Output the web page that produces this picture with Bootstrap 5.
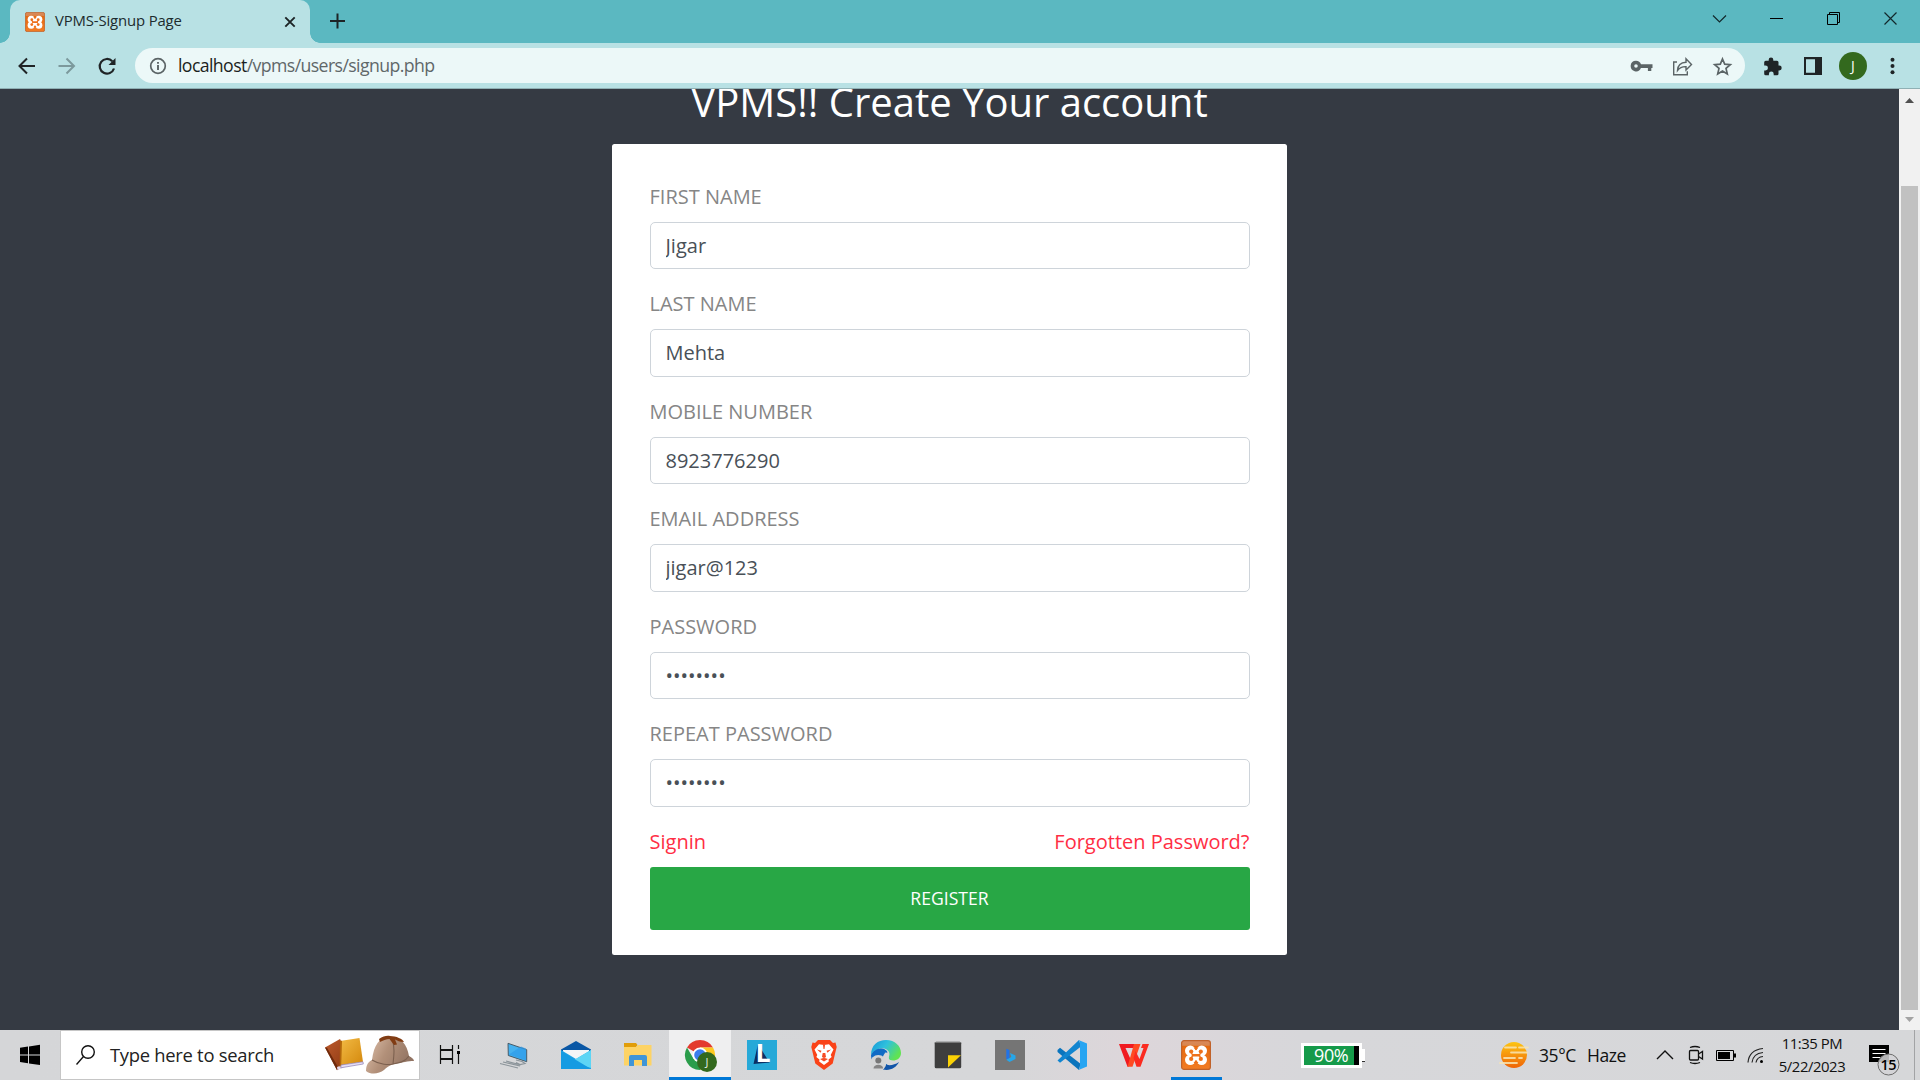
<!DOCTYPE html>
<html lang="en">
<head>
<meta charset="utf-8">
<title>VPMS-Signup Page</title>
<link href="https://cdn.jsdelivr.net/npm/bootstrap@5.3.0/dist/css/bootstrap.min.css" rel="stylesheet">
<style>
body{width:1920px;height:1080px;overflow:hidden;font-family:"Open Sans","Noto Sans",sans-serif;background:#343a40}
svg{display:block;flex:none}
.ui{font-family:"Open Sans","Noto Sans",sans-serif;white-space:nowrap}
.tabstrip{height:43px;background:#5bb8c1;padding-left:10px}
.browser-tab{position:relative;width:300px;height:43px;background:#b8e1e4;border-radius:10px 10px 0 0;padding-left:15px;padding-right:13px;color:#1c2b2d}
.browser-tab::before,.browser-tab::after{content:"";position:absolute;bottom:0;width:10px;height:10px}
.browser-tab::before{left:-10px;background:radial-gradient(circle at 0 0,transparent 9.5px,#b8e1e4 10px)}
.browser-tab::after{right:-10px;background:radial-gradient(circle at 100% 0,transparent 9.5px,#b8e1e4 10px)}
.tab-label{font-size:14.9px;letter-spacing:-.15px;line-height:20px;margin-left:10px;padding-bottom:3px}
.win-slot{width:57px;height:37px}
.toolbar{height:46px;background:#b8e1e4;border-bottom:1px solid #8fb0b4}
.tool-slot{width:40px;height:40px}
.omnibox{width:1610px;height:35px;border-radius:18px;background:#ecf8f8;padding-left:14px;padding-right:3px;margin-right:7px}
.address{font-size:17.7px;letter-spacing:-.6px;line-height:24px;margin-left:11px;padding-bottom:2px;color:#5f6769}
.address b{font-weight:400;color:#1b1f20}
.toolbar-end{width:8px}
.avatar{width:28px;height:28px;background:#33691e;color:#fff;font-size:14px}
.viewport{height:941px;background:#353a43}
.signup-col{width:675px}
.page-title{font-size:40px;line-height:48px;color:#fff;font-weight:400;margin:-11.5px 0 18.5px;white-space:nowrap}
.signup-form{background:#fff;border-radius:2.5px;padding:37.5px 37.5px 25px}
.field{margin-bottom:20px}
.field label{display:block;font-size:20px;line-height:30px;margin-bottom:10px;color:#868686;text-transform:uppercase}
.field .form-control{height:47.5px;font-size:20px;line-height:30px;padding:7.5px 15px;color:#495057;border:1px solid #ced4da;border-radius:5px}
.form-links{height:40px;font-size:20px;line-height:30px}
.form-links a{color:#ff2e44;text-decoration:none}
.btn-register{height:63.5px;background:#28a745;color:#fff;border-radius:3px;font-size:17.6px}
.scroll-track{width:21px;background:#f1f1f1;padding:9px 0 8px}
.scroll-thumb{width:17px;height:824px;background:#c1c1c1;margin-top:83px}
.taskbar{height:50px;background:linear-gradient(90deg,#d5d6d8 0,#d6d7d9 52%,#ddd6da 59%,#d7d7da 68%,#d6d7d9 100%);color:#111}
.start-slot{width:60px;height:50px}
.searchbox{width:360px;height:50px;background:#fff;border:1px solid #c6c6c6;padding-left:15px}
.search-label{font-size:18.4px;letter-spacing:-.28px;line-height:26px;margin-left:14px;width:213px;color:#222}
.view-slot{width:63px;height:50px}
.app-slot{width:62px;height:50px}
.app-open{background:#efeff0;border-bottom:3px solid #0078d7}
.app-open svg{margin-bottom:-3px}
.app-running{background:linear-gradient(#0078d7,#0078d7) center bottom/51px 3px no-repeat}
.battery{width:61px;height:25px;border:3px solid #fff;background:linear-gradient(90deg,#159a4a 50px,#000 50px);color:#fff;font-size:18px;letter-spacing:-.4px;line-height:18px;margin-left:74px;padding-left:10px}
.battery-tip{width:3px;height:13px;background:#fff;border-bottom:1px solid #333}
.weather{margin-left:133px;font-size:17.5px;letter-spacing:-.4px}
.clock{width:84px;margin-right:13px;font-size:14.9px;letter-spacing:-.45px;line-height:23px}
.show-desktop{width:6px;height:50px;border-left:1px solid #a2a3a5}
</style>
<script src="https://cdn.jsdelivr.net/npm/bootstrap@5.3.0/dist/js/bootstrap.bundle.min.js"></script>
</head>
<body class="d-flex flex-column m-0">
<svg width="0" height="0" class="position-absolute" aria-hidden="true">
  <defs>
    <linearGradient id="gx" x1="0" y1="0" x2="0" y2="1"><stop offset="0" stop-color="#d9895a"/><stop offset=".16" stop-color="#d9864f"/><stop offset=".2" stop-color="#e5690f"/><stop offset="1" stop-color="#f27c24"/></linearGradient>
    <symbol id="xampp" viewBox="0 0 30 30">
      <rect x=".6" y=".6" width="28.8" height="28.8" rx="2.5" fill="url(#gx)" stroke="#c0622a" stroke-width="1.2"/>
      <g fill="#fff"><circle cx="9.300" cy="10.800" r="5.300"/><circle cx="20.700" cy="10.800" r="5.300"/><circle cx="9.300" cy="19.700" r="5.300"/><circle cx="20.700" cy="19.700" r="5.300"/><path d="M7 10h16v10.500H7z"/></g>
      <g fill="#ee701a"><circle cx="10.200" cy="11.600" r="2.100"/><circle cx="19.800" cy="11.600" r="2.100"/><circle cx="10.200" cy="18.900" r="2.100"/><circle cx="19.800" cy="18.900" r="2.100"/><path d="M9.800 12.500l2.500 1.400h5.400l2.500-1.400-1 2.750 1 2.750-2.500-1.400h-5.400L9.800 18l1-2.750z"/><path d="M12.500 7.500h5L15 10.500zM12.500 22.900h5L15 20z"/></g>
    </symbol>
  </defs>
</svg>

<header class="ui">
  <div class="tabstrip d-flex align-items-start">
    <div class="browser-tab d-flex align-items-center">
      <svg width="20" height="20"><use href="#xampp"/></svg>
      <span class="tab-label me-auto">VPMS-Signup Page</span>
      <svg width="14" height="14" viewBox="0 0 14 14" stroke="#1d2426" stroke-width="1.900"><path d="M2.300 2.300l9.400 9.400M11.700 2.300l-9.400 9.400"/></svg>
    </div>
    <svg class="ms-3" width="24" height="43" viewBox="0 0 24 43" stroke="#1d2426" stroke-width="2"><path d="M4 21h15M11.500 13.500v15"/></svg>
    <div class="d-flex ms-auto pe-1">
      <div class="win-slot"><svg width="57" height="37" viewBox="-3 0 57 37" fill="none" stroke="#12282b" stroke-width="1.200"><path d="M22 15.500l6.500 6.500 6.500-6.500"/></svg></div>
      <div class="win-slot"><svg width="57" height="37" viewBox="-3 0 57 37" fill="none" stroke="#000"><path d="M22 18.500h13"/></svg></div>
      <div class="win-slot"><svg width="57" height="37" viewBox="-3 0 57 37" fill="none" stroke="#000"><path d="M22.500 14.500h10v10h-10zM24.500 14v-1.500h10v10H33"/></svg></div>
      <div class="win-slot"><svg width="57" height="37" viewBox="-3 0 57 37" fill="none" stroke="#12282b" stroke-width="1.200"><path d="M22.500 12.500l12 12M34.500 12.500l-12 12"/></svg></div>
    </div>
  </div>
  <div class="toolbar d-flex align-items-center">
    <div class="d-flex" style="padding-left:7px">
      <div class="tool-slot"><svg width="40" height="40" viewBox="0 0 40 40" fill="none" stroke="#1f2426" stroke-width="2"><path d="M28 20H13M20 12.500L12.500 20l7.500 7.500"/></svg></div>
      <div class="tool-slot"><svg width="40" height="40" viewBox="0 0 40 40" fill="none" stroke="#7c999c" stroke-width="2"><path d="M11.500 20h15M19.500 12.500L27 20l-7.500 7.500"/></svg></div>
      <div class="tool-slot"><svg width="40" height="40" viewBox="0 0 40 40" fill="none" stroke="#1f2426" stroke-width="2.200"><path d="M27 22.500a7.300 7.300 0 1 1-1.700-7.300"/><path d="M28.500 12v7h-7z" fill="#1f2426" stroke="none"/></svg></div>
    </div>
    <div class="omnibox d-flex align-items-center ms-auto">
      <svg width="18" height="18" viewBox="0 0 18 18" fill="none" stroke="#5b6466" stroke-width="1.700"><circle cx="9" cy="9" r="7.300"/><path d="M9 8v5M9 5v1.800" stroke-width="1.900"/></svg>
      <span class="address me-auto"><b>localhost</b>/vpms/users/signup.php</span>
      <div class="tool-slot"><svg width="40" height="40" viewBox="-1.500 0 40 40"><path fill="#5b6466" fill-rule="evenodd" d="M12.500 14.700a5.300 5.300 0 0 1 5 3.600H29v3.600h-1.200v3h-3.400v-3h-7a5.300 5.300 0 1 1-4.900-7.200zm0 3.500a1.800 1.800 0 1 0 0 3.600 1.800 1.800 0 0 0 0-3.600z"/></svg></div>
      <div class="tool-slot"><svg width="40" height="40" viewBox="-1 0 40 40" fill="none" stroke="#5b6466" stroke-width="1.400"><path d="M14 16h-3.300v12.800h13.600v-3.500"/><path d="M14.500 24.500c.3-5 3.500-8 8.500-8.200v-3.500l5.500 5.700-5.500 5.500v-3.400c-3.500-.2-6.300 1-8.500 3.900z"/></svg></div>
      <div class="tool-slot"><svg width="40" height="40" viewBox="-1 0 40 40" fill="none" stroke="#5b6466" stroke-width="1.700"><path d="M19.500 13l2.200 5.200 5.600.5-4.300 3.700 1.300 5.500-4.800-2.900-4.800 2.900 1.300-5.500-4.300-3.700 5.600-.5z"/></svg></div>
    </div>
    <div class="d-flex align-items-center">
      <div class="tool-slot"><svg width="40" height="40" viewBox="-.500 0 40 40"><path fill="#1f2426" d="M18.500 11.500a2.300 2.300 0 0 1 2.300 2.300v.9h3.700q1.500 0 1.500 1.500v3.400h.8a2.400 2.400 0 0 1 0 4.800H26v3.300q0 1.500-1.500 1.500h-3.300v-1.300a2.400 2.400 0 0 0-4.800 0v1.300h-3.200q-1.500 0-1.500-1.500v-3.200H13a2.400 2.400 0 0 0 0-4.900h-1.300v-3.400q0-1.500 1.500-1.500h3v-.9a2.300 2.300 0 0 1 2.300-2.300z"/></svg></div>
      <div class="tool-slot"><svg width="40" height="40" viewBox="0 0 40 40"><path fill="#1f2426" fill-rule="evenodd" d="M12 11h18v18H12zM14 13.300v13.400h9V13.300z"/></svg></div>
      <div class="tool-slot d-flex align-items-center justify-content-end pe-1"><div class="avatar rounded-circle d-flex align-items-center justify-content-center" style="margin-right:1px">J</div></div>
      <div class="tool-slot"><svg width="40" height="40" viewBox="0 0 40 40" fill="#1f2426"><circle cx="20.500" cy="13.800" r="2"/><circle cx="20.500" cy="20" r="2"/><circle cx="20.500" cy="26.200" r="2"/></svg></div>
    </div>
    <div class="toolbar-end"></div>
  </div>
</header>

<div class="viewport d-flex overflow-hidden">
  <main class="flex-grow-1 d-flex justify-content-center">
    <div class="signup-col">
      <h2 class="page-title text-center">VPMS!! Create Your account</h2>
      <form class="signup-form">
        <div class="field"><label for="f1">First Name</label><input id="f1" class="form-control" type="text" value="Jigar"></div>
        <div class="field"><label for="f2">Last Name</label><input id="f2" class="form-control" type="text" value="Mehta"></div>
        <div class="field"><label for="f3">Mobile Number</label><input id="f3" class="form-control" type="text" value="8923776290"></div>
        <div class="field"><label for="f4">Email address</label><input id="f4" class="form-control" type="text" value="jigar@123"></div>
        <div class="field"><label for="f5">Password</label><input id="f5" class="form-control" type="password" value="jigar123"></div>
        <div class="field"><label for="f6">Repeat Password</label><input id="f6" class="form-control" type="password" value="jigar123"></div>
        <div class="form-links d-flex justify-content-between"><a href="#">Signin</a><a href="#">Forgotten Password?</a></div>
        <button type="button" class="btn btn-register w-100 border-0">REGISTER</button>
      </form>
    </div>
  </main>
  <div class="scroll-track d-flex flex-column align-items-center">
    <svg width="9" height="5" viewBox="0 0 9 5"><path d="M0 5L4.500 0 9 5z" fill="#505050"/></svg>
    <div class="scroll-thumb"></div>
    <svg class="mt-auto" width="9" height="5" viewBox="0 0 9 5"><path d="M0 0l4.500 5L9 0z" fill="#a3a3a3"/></svg>
  </div>
</div>

<footer class="taskbar ui d-flex align-items-center">
  <div class="start-slot"><svg width="60" height="50" viewBox="0 0 60 50"><path d="M20 17.800l8-1.200v7.800h-8zM29 16.400l11-1.600v9.600H29zM20 25.400h8v7.900l-8-1.200zM29 25.400h11V35l-11-1.600z"/></svg></div>
  <div class="searchbox d-flex align-items-center">
    <svg width="20" height="22" viewBox="1 0 20 22" fill="none" stroke="#111" stroke-width="1.400"><circle cx="13" cy="8" r="6.300"/><path d="M8.500 12.500L1.500 20.500"/></svg>
    <span class="search-label">Type here to search</span>
    <svg width="92" height="48" viewBox="324 1031 92 48">
      <defs>
        <linearGradient id="bk1" x1="0" y1="0" x2="1" y2="1"><stop offset="0" stop-color="#bd5a2c"/><stop offset="1" stop-color="#87350f"/></linearGradient>
        <linearGradient id="bk2" x1="0" y1="0" x2="1" y2="1"><stop offset="0" stop-color="#f2bb45"/><stop offset="1" stop-color="#d4880c"/></linearGradient>
        <linearGradient id="hat" x1="0" y1="0" x2="1" y2=".4"><stop offset="0" stop-color="#e0c3ae"/><stop offset=".5" stop-color="#b29079"/><stop offset="1" stop-color="#927463"/></linearGradient>
      </defs>
      <path d="M326 1047.500l15-8.500 12 23-15 8z" fill="url(#bk1)"/><path d="M326 1047.500l2 .3 12 21-2 1.500z" fill="#6f2a0c"/><path d="M338 1067l16-6v3l-15.500 6z" fill="#e6dcf2"/>
      <path d="M341 1041l19.500-3 3.500 24-22.500 3z" fill="url(#bk2)"/><path d="M341 1041l2-.3-.8 25-1.500 1.500z" fill="#b3660b"/><path d="M342 1065l22-3.200.3 2.200-22.500 3.800z" fill="#e4ddf6" stroke="#8f81b2" stroke-width=".7"/>
      <path d="M373 1060c2-15 7-23 18-23 11 0 17 7 19 19 3 2 5 3 5 5-3 0-6 0-9 1-10 1-16 3-21 8-5 4-13 5-18 1 0-6 2-9 6-11z" fill="url(#hat)"/>
      <path d="M373 1060c8 5 17 5 21 4 6-1 12-2 16-8M393 1038c3 9 2 17 1 26" fill="none" stroke="#7c604f" stroke-width="1.100"/>
      <path d="M380 1039c4-3 8-3.500 11-3 6 0 13 3 14 6-4 0-7-1.500-9-2.500l2 5-3 .5-4.500-6c-3 0-7 1.500-9.500 3z" fill="#813c13"/>
    </svg>
  </div>
  <div class="view-slot"><svg width="62" height="50" viewBox="0 0 62 50" fill="none" stroke="#111" stroke-width="1.200"><path d="M20.500 15v4.500h12V15M20.500 34v-4.500h12V34M20.500 20.500h12v8h-12zM38.500 15v4M38.500 24v10"/><path d="M37 21h3v3h-3z" fill="#000" stroke="none"/></svg></div>

  <div class="app-slot d-flex justify-content-center"><svg width="50" height="50" viewBox="0 0 50 50"><path d="M19 13.300l18.700 6.400v12L19.300 25.500z" fill="#46b1ef" stroke="#41505b" stroke-width=".9"/><path d="M20 24.500l12-8 5 2v12z" fill="#2e9be9" opacity=".7"/><path d="M27 30l6 1.500 3 2-5 1-4-2M11 33.500l18 4.500M14 32l17 4M17 31l15 4" fill="none" stroke="#8b949a" stroke-width="1.200"/></svg></div>
  <div class="app-slot d-flex justify-content-center"><svg width="50" height="50" viewBox="0 0 50 50"><path d="M10 19.500L25 11l15 8.500V25H10z" fill="#0a57a5"/><path d="M12 20h26v12H12z" fill="#f3f5f7"/><path d="M10 20l15 9 15-9v19H10z" fill="#1fa5e5"/><path d="M40 20L19.500 32 40 38z" fill="#5dd5f5"/><path d="M10 21l30 18H10z" fill="#159be2"/></svg></div>
  <div class="app-slot d-flex justify-content-center"><svg width="50" height="50" viewBox="0 0 50 50"><path d="M11 13h12l1.500 2-2 3H11z" fill="#e19d09"/><path d="M11 17h12l2-2h13.500v20.500H11z" fill="#fdd365"/><path d="M16 36V27q0-2 2-2h14q2 0 2 2v9h-5v-6h-8v6z" fill="#3f95d8"/></svg></div>
  <div class="app-slot app-open d-flex justify-content-center"><svg width="50" height="50" viewBox="0 0 50 50"><path d="M25 25L12 17.500A15 15 0 0 1 38 17.500H25z" fill="#e33b2e"/><path d="M25 17.500H38A15 15 0 0 1 25 40l6.500-11.300z" fill="#fdc921"/><path d="M12 17.500A15 15 0 0 0 25 40l6.500-11.300h-13z" fill="#2a9d4b"/><circle cx="25" cy="25" r="7.500" fill="#fff"/><circle cx="25" cy="25" r="5.800" fill="#3b7ded"/><circle cx="32" cy="32" r="10" fill="#33691e"/><text x="32" y="36" font-size="11" text-anchor="middle" fill="#e8eee4">J</text></svg></div>
  <div class="app-slot d-flex justify-content-center"><svg width="50" height="50" viewBox="0 0 50 50"><path d="M10 10h30v30H10z" fill="#26a9d8"/><path d="M21 14l-4.500 20 16-1.500z" fill="#0c2f63"/><text x="18.600" y="32" font-family="Open Sans" font-weight="700" font-size="25" fill="#fff" textLength="15" lengthAdjust="spacingAndGlyphs">L</text></svg></div>
  <div class="app-slot d-flex justify-content-center"><svg width="50" height="50" viewBox="0 0 50 50"><path d="M19 10h12l3 3 2.500-.5 1.200 4.500-1 4-3 12.500L25 40l-8.700-6.500-3-12.500-1-4 1.200-4.500L16 13z" fill="#fa4318"/><path d="M25 15l5-.8 4.500 5.300-2.800 5.500 1 2-3.200 2.500.3 2L25 35l-4.800-3.500.3-2-3.200-2.500 1-2-2.800-5.500L20 14.200z" fill="#fff"/><path d="M18 19.500l4.500 1.200-1 2zM32 19.500l-4.500 1.200 1 2zM23 27l2 1.200 2-1.200-.7-4h-2.600zM21 29l4-1.200 4 1.200-4 2.500zM24 15h2l-.5 4h-1z" fill="#f64b25"/></svg></div>
  <div class="app-slot d-flex justify-content-center"><svg width="50" height="50" viewBox="0 0 50 50"><defs><linearGradient id="ed" x1="0" y1="0" x2="1" y2=".5"><stop offset="0" stop-color="#1595d8"/><stop offset=".5" stop-color="#2fc1dd"/><stop offset="1" stop-color="#60e352"/></linearGradient></defs><path d="M10 25c0-10 7-15 15-15 9 0 15 6 15 13 0 5-4 7.500-8 7.500-3.500 0-5.500-1.500-4-4 2-5-3-9-8-8-5 .5-8 3.500-10 6.500z" fill="url(#ed)"/><path d="M10 25c2-4 6-7 11-6.500 3 .4 5 2 5.500 4-4 1-5 4-4.500 7 1 3 3 5 6 6l-6 3c-7-1-12-6-12-13.500z" fill="#116bc5"/><path d="M22 33c4 3 10 3 16-1-3 6-9 9-16 7.500z" fill="#1054a8"/><path d="M24 22.500q3.500 0 4 3-1 3 1 4.500 4 2 9 0-5 5-11 4.500-4-1.500-4.500-6z" fill="#d6d7d9"/><circle cx="17.300" cy="33" r="8" fill="#d4d5d6"/><circle cx="17.300" cy="30.500" r="3" fill="#777"/><path d="M12.500 38.500c0-5 9.600-5 9.600 0z" fill="#858585"/></svg></div>
  <div class="app-slot d-flex justify-content-center"><svg width="50" height="50" viewBox="0 0 50 50"><rect x="11.700" y="11.700" width="26.500" height="26.500" rx="1.500" fill="#3e3e3e"/><path d="M11.700 12.500h26.500" stroke="#777"/><path d="M25 25.200h13L25 37.500z" fill="#fbd205"/></svg></div>
  <div class="app-slot d-flex justify-content-center"><svg width="50" height="50" viewBox="0 0 50 50"><path d="M10 10h30v30H10z" fill="#757575"/><path d="M21.300 18.700l3.200 1.200v8.600l-3.200 1z" fill="#2173e8"/><path d="M25 23l5.500 2.500v3.500l-6 3-3.200-2.300 5-2.700z" fill="#26a6ea"/></svg></div>
  <div class="app-slot d-flex justify-content-center"><svg width="50" height="50" viewBox="0 0 50 50"><path d="M10.500 20l2.500-2.200 20.500 16L32 40 10.500 22z" fill="#0a74bd"/><path d="M10.500 30.500L32 10l2 6.500L13 32.700z" fill="#1185d0"/><path d="M31.500 10L40 13.500v23L31.500 40q1.500-1 1.500-3V13q0-2-1.500-3z" fill="#27a5f2"/></svg></div>
  <div class="app-slot d-flex justify-content-center"><svg width="50" height="50" viewBox="0 0 50 50"><path d="M10 14h16v4h-9.500l5 11-2 7.700h-1z" fill="#f01a20"/><path d="M25 14h6.500l-8 22.700h-5z" fill="#ff4a22"/><path d="M26.500 21l4 8 4-11h-2.500l1.500-4H40l-8.500 22.700h-4L24.500 28z" fill="#fb2b20"/></svg></div>
  <div class="app-slot app-running d-flex justify-content-center align-items-center"><svg width="30" height="30"><use href="#xampp"/></svg></div>

  <div class="battery">90%</div><div class="battery-tip"></div>

  <div class="weather d-flex align-items-center">
    <svg width="32" height="32" viewBox="0 0 32 32"><defs><linearGradient id="sn" x1="0" y1="0" x2="0" y2="1"><stop offset="0" stop-color="#fdc512"/><stop offset="1" stop-color="#ef6408"/></linearGradient></defs><circle cx="16" cy="16" r="13" fill="url(#sn)"/><path d="M7 8.500h11M21 8.500h9M13 13.500h16M6 19h11M21 19h3M2 24h17" stroke="#f8e5b4" stroke-width="1.800" stroke-linecap="round" opacity=".85"/></svg>
    <span style="margin-left:9px">35°C</span><span style="margin-left:11px">Haze</span>
  </div>
  <div class="tray d-flex align-items-center ms-auto">
    <svg width="30" height="50" viewBox="0 0 30 50" fill="none" stroke="#111" stroke-width="1.400"><path d="M7 29l8-8 8 8"/></svg>
    <svg width="30" height="50" viewBox="0 0 30 50" fill="none" stroke="#111" stroke-width="1.300"><rect x="9.500" y="20.500" width="9" height="9.500" rx="1"/><path d="M18.500 24l4-2.500v7.500l-4-2.500M10 17.500q5-2 10 0M10 32.500q5 2 10 0"/></svg>
    <svg width="30" height="50" viewBox="0 0 30 50"><path d="M6.500 20.500h17v10h-17z" fill="none" stroke="#000"/><path d="M8 22h12v7H8zM24 23.500h2v4h-2z"/></svg>
    <svg width="30" height="50" viewBox="0 0 30 50" fill="none" stroke="#222" stroke-width="1.200"><path d="M8 32.500q1-12.500 15-14M12 32.500q1-9 11-10M16 32.500q1-5.500 7-6"/><circle cx="21.500" cy="31.500" r="1.500" fill="#000" stroke="none"/></svg>
    <div class="clock text-center">11:35 PM<br>5/22/2023</div>
    <svg width="47" height="50" viewBox="0 0 47 50"><path d="M2 15h20v17H2z"/><path d="M5.500 19.500h13M5.500 23.500h13M5.500 27.500h8" stroke="#fff" stroke-width="1.200"/><circle cx="21.500" cy="34.500" r="10.500" fill="#d3d4d6" fill-opacity=".85" stroke="#6c6c6c"/><text x="21.200" y="40" font-size="14.500" font-weight="600" text-anchor="middle" letter-spacing="-.5">15</text></svg>
    <div class="show-desktop"></div>
  </div>
</footer>
</body>
</html>
